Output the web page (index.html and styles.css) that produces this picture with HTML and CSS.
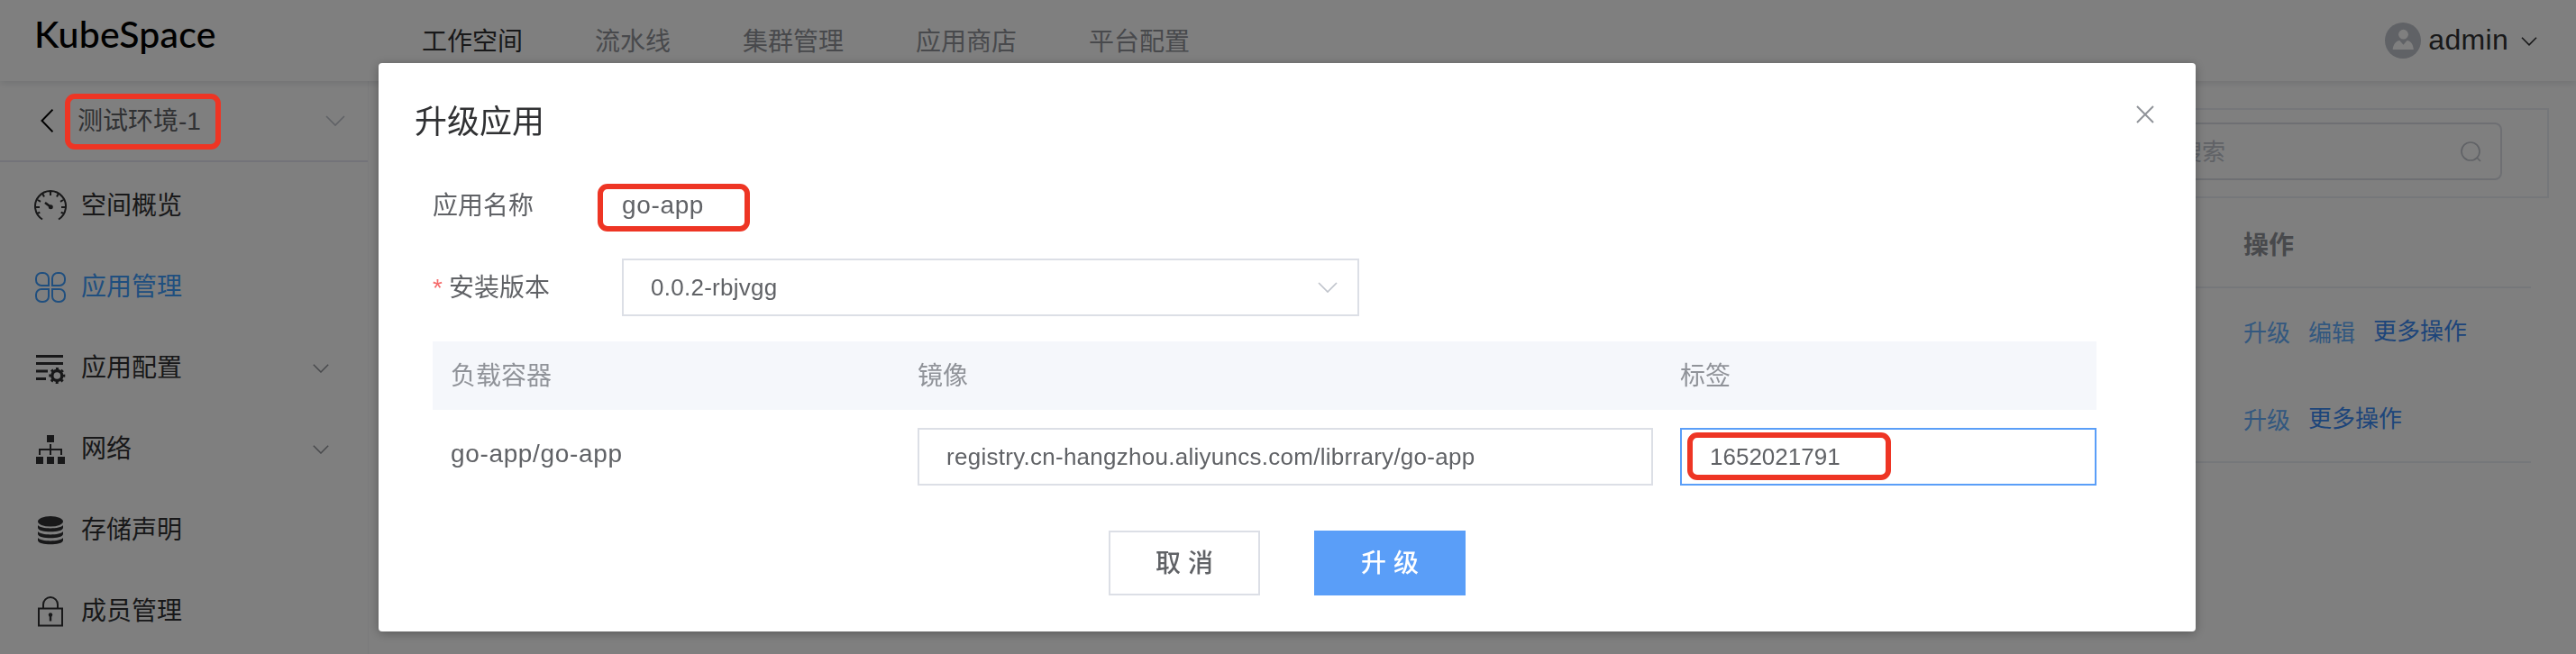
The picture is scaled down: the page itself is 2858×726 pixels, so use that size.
FILE: index.html
```html
<!DOCTYPE html>
<html lang="zh-CN">
<head>
<meta charset="utf-8">
<title>KubeSpace</title>
<link rel="stylesheet" href="styles.css">
</head>
<body>
<div class="app">
  <header class="topbar">
    <div class="logo">KubeSpace</div>
    <nav class="tabs">
      <a class="tab active">工作空间</a>
      <a class="tab">流水线</a>
      <a class="tab">集群管理</a>
      <a class="tab">应用商店</a>
      <a class="tab">平台配置</a>
    </nav>
    <div class="user">
      <svg class="avatar" viewBox="0 0 40 40"><circle cx="20" cy="20" r="20" fill="#c0c4cc"/><circle cx="20.5" cy="13.2" r="5.4" fill="#fff"/><path d="M8.7 30C9 25 12 20.5 16.3 20L20.5 24.8 24.5 20C29 20.5 31.600 25 31.800 30Z" fill="#fff"/></svg>
      <span class="user-name">admin</span>
      <svg class="user-arrow" viewBox="0 0 18 10"><path d="M1 .8L9 8.800 17 .8" fill="none" stroke="#303133" stroke-width="1.6"/></svg>
    </div>
  </header>
  <div class="body">
    <aside class="side">
      <div class="workspace">
        <svg class="back" viewBox="0 0 14 26"><path d="M13.500 .7L1.500 13 13.500 25.300" fill="none" stroke="#000" stroke-width="2"/></svg>
        <span class="workspace-name">测试环境-1</span>
        <svg class="ws-arrow" viewBox="0 0 22 12"><path d="M1 1L11 11 21 1" fill="none" stroke="#c0c4cc" stroke-width="1.700"/></svg>
      </div>
      <ul class="menu">
        <li class="item">
          <svg class="icon" viewBox="0 0 36 36" fill="none" stroke="#303133" stroke-width="2"><path d="M9 32.500A17 17 0 1 1 27 32.500M18 2v4M2 19h4M30 19h4M9.500 4.500l1.500 3M26.500 4.500L25 7.500M4 11l3 1.800M32 11l-3 1.800M3.300 26l3-1.200M32.700 26l-3-1.200"/><path d="M12 14l6 4.500" stroke-width="2.600"/><circle cx="18.300" cy="18.800" r="2.500" fill="#303133" stroke="none"/></svg>
          <span>空间概览</span>
        </li>
        <li class="item active">
          <svg class="icon" viewBox="0 0 36 36" fill="none" stroke="#409eff" stroke-width="2"><path d="M16 16H8A6 6 0 0 1 2 10V8A6 6 0 0 1 8 2H10A6 6 0 0 1 16 8ZM20 16V8A6 6 0 0 1 26 2H28A6 6 0 0 1 34 8V10A6 6 0 0 1 28 16ZM16 20V28A6 6 0 0 1 10 34H8A6 6 0 0 1 2 28V26A6 6 0 0 1 8 20ZM20 20H28A6 6 0 0 1 34 26V28A6 6 0 0 1 28 34H26A6 6 0 0 1 20 28Z"/></svg>
          <span>应用管理</span>
        </li>
        <li class="item">
          <svg class="icon" viewBox="0 0 36 36"><path d="M2 3h30v3H2zM2 11h30v3H2zM2 19.500h13v3H2zM2 28h11v3H2z" fill="#303133"/><circle cx="25.300" cy="26" r="5.500" fill="none" stroke="#303133" stroke-width="3.400"/><circle cx="25.300" cy="26" r="7.800" fill="none" stroke="#303133" stroke-width="2.400" stroke-dasharray="3.060 3.060" stroke-dashoffset="1.530"/></svg>
          <span>应用配置</span>
          <svg class="arrow" viewBox="0 0 18 10"><path d="M.8 .8L9 9 17.200 .8" fill="none" stroke="#909399" stroke-width="1.500"/></svg>
        </li>
        <li class="item">
          <svg class="icon" viewBox="0 0 36 36"><path d="M14 2h8v8h-8zM2 26h8v8H2zM14 26h8v8h-8zM26 26h8v8h-8z" fill="#303133"/><path d="M18 12v12M6 24v-6h24v6" fill="none" stroke="#303133" stroke-width="2"/></svg>
          <span>网络</span>
          <svg class="arrow" viewBox="0 0 18 10"><path d="M.8 .8L9 9 17.200 .8" fill="none" stroke="#909399" stroke-width="1.500"/></svg>
        </li>
        <li class="item">
          <svg class="icon" viewBox="0 0 36 36" fill="#303133"><ellipse cx="18" cy="7.800" rx="14" ry="5.800"/><path d="M4 12c3 4.500 25 4.500 28 0v3c-1 5.800-27 5.800-28 0zM4 19c3 4.500 25 4.500 28 0v3c-1 5.800-27 5.800-28 0zM4 26c3 4.500 25 4.500 28 0v3c-1 5.800-27 5.800-28 0z"/></svg>
          <span>存储声明</span>
        </li>
        <li class="item">
          <svg class="icon" viewBox="0 0 36 36" fill="none" stroke="#303133" stroke-width="2"><path d="M5 14.500h26v19H5zM10 14V10a8 8 0 0 1 16 0v4"/><path d="M18 21v7.500" stroke-width="2.400"/><circle cx="18" cy="21.500" r="2.200" fill="#303133" stroke="none"/></svg>
          <span>成员管理</span>
        </li>
      </ul>
    </aside>
    <main class="content">
      <div class="toolbar">
        <div class="search">
          <span>请输入名称搜索</span>
          <svg class="search-icon" viewBox="0 0 24 24"><circle cx="11" cy="11" r="10" fill="none" stroke="#c0c4cc" stroke-width="1.700"/><path d="M18 18l4 4" stroke="#c0c4cc" stroke-width="1.700"/></svg>
        </div>
      </div>
      <div class="list">
        <div class="list-head">操作</div>
        <div class="list-row"><a class="link">升级</a><a class="link">编辑</a><a class="more">更多操作</a></div>
        <div class="list-row last"><a class="link">升级</a><a class="more">更多操作</a></div>
      </div>
    </main>
  </div>
</div>

<div class="mask">
  <section class="dialog">
    <div class="dialog-head">
      <h1 class="title">升级应用</h1>
      <svg class="close" viewBox="0 0 20 20"><path d="M1 1L19 19M19 1L1 19" stroke="#909399" stroke-width="2"/></svg>
    </div>
    <div class="form">
      <div class="field">
        <label class="label">应用名称</label>
        <span class="value">go-app</span>
      </div>
      <div class="field version">
        <label class="label"><i class="star">*</i>安装版本</label>
        <div class="input select">0.0.2-rbjvgg<svg class="select-arrow" viewBox="0 0 22 12"><path d="M1 1L11 11 21 1" fill="none" stroke="#c0c4cc" stroke-width="1.700"/></svg></div>
      </div>
      <div class="grid grid-head"><span>负载容器</span><span>镜像</span><span>标签</span></div>
      <div class="grid grid-row">
        <span class="container-name">go-app/go-app</span>
        <div class="input">registry.cn-hangzhou.aliyuncs.com/librrary/go-app</div>
        <div class="input focus">1652021791</div>
      </div>
    </div>
    <div class="actions">
      <button class="btn">取 消</button>
      <button class="btn primary">升 级</button>
    </div>
  </section>
</div>
<i class="mark mark-space"></i>
<i class="mark mark-name"></i>
<i class="mark mark-tag"></i>
</body>
</html>
```
FILE: styles.css
```css
* { box-sizing: border-box; }
body {
  margin: 0;
  height: 726px;
  overflow: hidden;
  background: #fff;
  color: #303133;
  font: 28px/40px "Liberation Sans", "Noto Sans CJK SC", sans-serif;
}
svg { display: block; flex: none; }

.app { height: 726px; display: flex; flex-direction: column; }
.topbar {
  height: 90px;
  flex: none;
  display: flex;
  align-items: center;
  padding-right: 42px;
  box-shadow: 0 2px 8px rgba(0, 21, 41, .12);
  position: relative;
}
.logo {
  width: 468px;
  padding: 0 0 14px 38px;
  color: #000;
  font: 500 41px/50px Lato, sans-serif;
  letter-spacing: .2px;
}
.tabs { display: flex; gap: 80px; flex: 1; padding-top: 3px; color: #909399; }
.tab.active { color: #303133; }
.user { display: flex; align-items: center; font-size: 32px; }
.user-name { letter-spacing: .3px; margin-top: -2px; }
.avatar { width: 40px; height: 40px; margin-right: 8px; }
.user-arrow { width: 18px; height: 10px; margin: 2px 1px 0 14px; }

.body { flex: 1; display: flex; min-height: 0; }
.side { width: 409px; flex: none; border-right: 1px solid #f6f6f8; }
.workspace {
  height: 90px;
  display: flex;
  align-items: center;
  padding: 0 25px 0 45px;
  border-bottom: 2px solid #e6e6f2;
  color: #606266;
}
.back { width: 14px; height: 26px; }
.workspace-name { flex: 1; margin-left: 27px; padding-top: 2px; }
.ws-arrow { width: 22px; height: 12px; }
.menu { list-style: none; margin: 4px 0 0; padding: 0; }
.item { height: 90px; display: flex; align-items: center; padding: 0 43px 0 38px; }
.item span { flex: 1; margin-left: 16px; }
.item.active { color: #409eff; }
.icon { width: 36px; height: 36px; }
.arrow { width: 18px; height: 10px; }

.content { flex: 1; padding: 30px 30px 0; }
.toolbar {
  height: 100px;
  display: flex;
  justify-content: flex-end;
  align-items: center;
  padding: 0 50px 4px 0;
  border: 2px solid #ebeef5;
}
.search {
  width: 540px;
  height: 64px;
  display: flex;
  align-items: center;
  justify-content: space-between;
  padding: 2px 20px 0 49px;
  border: 2px solid #dcdfe6;
  border-radius: 8px;
  color: #c0c4cc;
  font-size: 26px;
}
.search-icon { width: 24px; height: 24px; }
.list { margin-right: 20px; font-size: 26px; }
.list-head {
  height: 100px;
  padding: 33px 0 0 2050px;
  border-bottom: 2px solid #ebeef5;
  color: #909399;
  font-size: 28px;
  font-weight: 700;
  white-space: nowrap;
}
.list-row { height: 97px; display: flex; align-items: center; gap: 20px; padding-left: 2050px; white-space: nowrap; }
.list-row.last { border-bottom: 2px solid #ebeef5; padding-top: 2px; }
.link { padding-top: 3px; color: #66b1ff; }
.more { margin-top: -1px; color: #3b8bf5; }

.mask { position: fixed; inset: 0; padding: 70px 0 0 420px; background: rgba(0, 0, 0, .5); }
.dialog {
  width: 2016px;
  height: 631px;
  background: #fff;
  border-radius: 4px;
  box-shadow: 0 2px 12px rgba(0, 0, 0, .3);
  color: #606266;
}
.dialog-head { height: 128px; display: flex; justify-content: space-between; padding: 42px 46px 0 40px; }
.title { margin: 0; color: #303133; font-size: 36px; font-weight: 400; line-height: 48px; }
.close { width: 20px; height: 20px; margin-top: 5px; }
.form { padding: 0 110px 0 60px; }
.field { height: 60px; display: flex; align-items: center; }
.version { height: 64px; margin: 29px 0 28px; }
.label { width: 210px; padding-top: 2px; }
.value, .container-name { letter-spacing: .65px; }
.star { margin-right: 7px; color: #f56c6c; font-style: normal; }
.input {
  height: 64px;
  display: flex;
  align-items: center;
  padding: 0 30px;
  border: 2px solid #dcdfe6;
  background: #fff;
  font-size: 26px;
  letter-spacing: .27px;
}
.select { width: 818px; justify-content: space-between; padding-right: 22px; }
.select-arrow { width: 22px; height: 12px; }
.focus { border-color: #5a9ef8; padding-left: 31px; letter-spacing: 0; }
.grid { display: grid; grid-template-columns: 538px 846px 462px; }
.grid-head { height: 76px; padding-top: 2px; align-items: center; background: #f5f7fb; color: #909399; }
.grid-head span:first-child, .container-name { padding-left: 20px; }
.grid-row { padding-top: 20px; }
.grid-row .input:nth-child(2) { margin-right: 30px; }
.container-name { line-height: 58px; }
.actions { display: flex; justify-content: center; gap: 60px; padding-top: 50px; }
.btn {
  width: 168px;
  height: 72px;
  padding: 2px 0 0;
  border: 2px solid #dcdfe6;
  background: #fff;
  color: #606266;
  font: 500 28px/40px "Liberation Sans", "Noto Sans CJK SC", sans-serif;
}
.primary { border-color: #5a9ef8; background: #5a9ef8; color: #fff; }

/* red highlight frames laid over the page */
.mark { position: absolute; border: 6px solid #ee3524; border-radius: 11px; }
.mark-space { left: 72px; top: 104px; width: 173px; height: 62px; }
.mark-name { left: 663px; top: 204px; width: 169px; height: 53px; }
.mark-tag { left: 1872px; top: 480px; width: 226px; height: 53px; }
```
